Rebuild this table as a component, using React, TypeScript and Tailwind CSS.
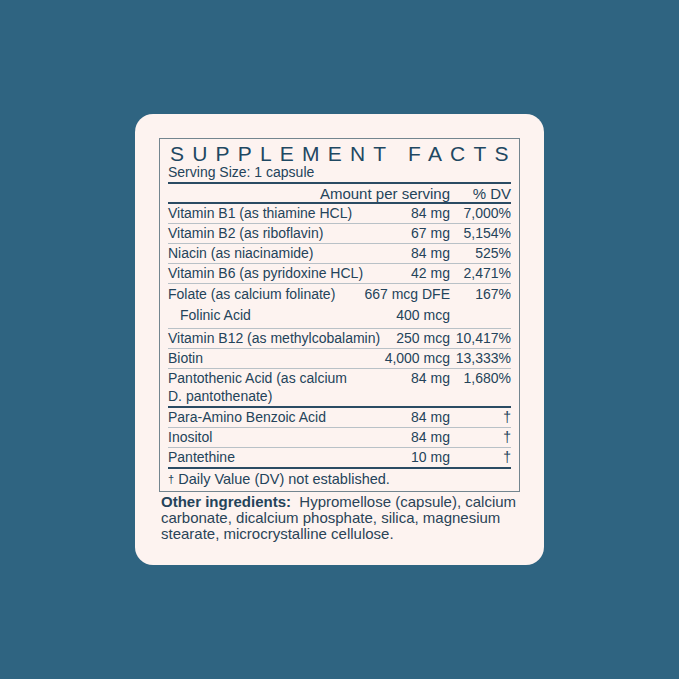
const rows1 = [
  { name: "Vitamin B1 (as thiamine HCL)", amt: "84 mg", dv: "7,000%" },
  { name: "Vitamin B2 (as riboflavin)", amt: "67 mg", dv: "5,154%" },
  { name: "Niacin (as niacinamide)", amt: "84 mg", dv: "525%" },
  { name: "Vitamin B6 (as pyridoxine HCL)", amt: "42 mg", dv: "2,471%" },
];

const rows2 = [
  { name: "Para-Amino Benzoic Acid", amt: "84 mg" },
  { name: "Inositol", amt: "84 mg" },
  { name: "Pantethine", amt: "10 mg" },
];

function Row({ name, amt, dv, last }: { name: React.ReactNode; amt: string; dv: React.ReactNode; last?: boolean }) {
  return (
    <div className={"flex items-start leading-[19px] " + (last ? "border-b-2 border-[#2b4b63]" : "border-b border-[#b9c1c7]")}>
      <div className="whitespace-nowrap">{name}</div>
      <div className="ml-auto text-right whitespace-nowrap">{amt}</div>
      <div className="w-[61px] text-right">{dv}</div>
    </div>
  );
}

export default function App() {
  return (
    <div className="h-[679px] w-[679px] bg-[#2f6481] flex items-center justify-center" style={{ fontFamily: '"Liberation Sans", Arial, sans-serif' }}>
      <div className="w-[409px] h-[451px] bg-[#fdf3f0] rounded-[18px] p-6 text-[#24435a]">
        <div className="border border-[#73858f] px-2 pb-[2px]">
          <div className="text-[21px] leading-[22px] pt-[4px] pl-[2px] whitespace-nowrap tracking-[8.2px] text-[#1f4862]">SUPPLEMENT FACTS</div>
          <div className="text-[14px] leading-[15px] pb-[2px]">Serving Size: 1 capsule</div>
          <div className="border-t-2 border-[#2b4b63] flex text-[15px] leading-[17px] pt-px">
            <div className="ml-auto">Amount per serving</div>
            <div className="w-[61px] text-right">% DV</div>
          </div>
          <div className="border-t-2 border-[#2b4b63] text-[14px]">
            {rows1.map((r) => (
              <Row key={r.name} name={r.name} amt={r.amt} dv={r.dv} />
            ))}
            <div className="border-b border-[#b9c1c7] leading-[21px] pb-[2px]">
              <div className="flex">
                <div className="whitespace-nowrap">Folate (as calcium folinate)</div>
                <div className="ml-auto">667 mcg DFE</div>
                <div className="w-[61px] text-right">167%</div>
              </div>
              <div className="flex">
                <div className="pl-3">Folinic Acid</div>
                <div className="ml-auto">400 mcg</div>
                <div className="w-[61px]"></div>
              </div>
            </div>
            <Row name="Vitamin B12 (as methylcobalamin)" amt="250 mcg" dv="10,417%" />
            <Row name="Biotin" amt="4,000 mcg" dv="13,333%" />
            <div className="border-b-2 border-[#2b4b63] leading-[18px] pb-px">
              <div className="flex">
                <div className="whitespace-nowrap">Pantothenic Acid (as calcium</div>
                <div className="ml-auto">84 mg</div>
                <div className="w-[61px] text-right">1,680%</div>
              </div>
              <div>D. pantothenate)</div>
            </div>
            {rows2.map((r, i) => (
              <Row key={r.name} name={r.name} amt={r.amt} dv="†" last={i === rows2.length - 1} />
            ))}
          </div>
          <div className="text-[14.5px] leading-[19px] pt-[1px]">
            <span className="text-[11px] align-top">†</span> Daily Value (DV) not established.
          </div>
        </div>
        <p className="mt-[2px] text-[15px] leading-[16px] pl-[2px] text-[#2a4357]">
          <span className="font-bold text-[#24435a]">Other ingredients:</span>&nbsp; Hypromellose (capsule), calcium carbonate, dicalcium phosphate, silica, magnesium stearate, microcrystalline cellulose.
        </p>
      </div>
    </div>
  );
}
